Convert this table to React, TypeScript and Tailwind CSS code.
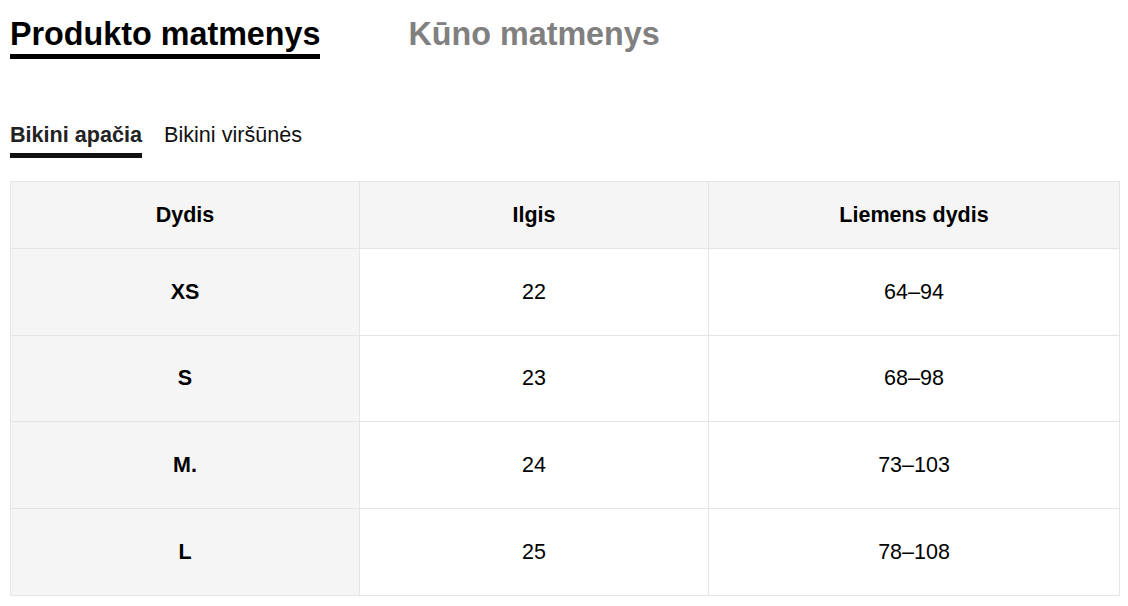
const rows = [
  { size: 'XS', length: '22', waist: '64–94', h: 'h-[87px]' },
  { size: 'S', length: '23', waist: '68–98', h: 'h-[86px]' },
  { size: 'M.', length: '24', waist: '73–103', h: 'h-[87px]' },
  { size: 'L', length: '25', waist: '78–108', h: 'h-[87px]' },
];

export default function App() {
  return (
    <div className="min-h-[606px] bg-white px-[10px] font-['Liberation_Sans',Arial,sans-serif] text-black">
      {/* main tabs */}
      <div className="flex gap-[88px] pt-[18px]">
        <div className="border-b-[5px] border-black pb-[4px] text-[32.3px] font-bold leading-[32px]">Produkto matmenys</div>
        <div className="pb-[4px] text-[32.3px] font-bold leading-[32px] text-[#808080]">Kūno matmenys</div>
      </div>

      {/* sub tabs */}
      <div className="mt-[65px] flex gap-[22px]">
        <div className="border-b-[5px] border-[#111] pb-[8px] text-[21.6px] font-bold leading-[21px] text-[#222]">Bikini apačia</div>
        <div className="pb-[8px] text-[21.6px] leading-[21px] text-[#111]">Bikini viršūnės</div>
      </div>

      <table className="mt-[23px] w-[1110px] table-fixed border-collapse text-[21.5px]">
        <colgroup>
          <col className="w-[349px]" />
          <col className="w-[349px]" />
          <col />
        </colgroup>
        <thead>
          <tr className="h-[67px] bg-[#f5f5f5]">
            <th className="border border-[#e5e5e5] text-center font-bold">Dydis</th>
            <th className="border border-[#e5e5e5] text-center font-bold">Ilgis</th>
            <th className="border border-[#e5e5e5] text-center font-bold">Liemens dydis</th>
          </tr>
        </thead>
        <tbody>
          {rows.map((r) => (
            <tr key={r.size} className={r.h}>
              <td className="border border-[#e5e5e5] bg-[#f5f5f5] text-center font-bold">{r.size}</td>
              <td className="border border-[#e5e5e5] text-center">{r.length}</td>
              <td className="border border-[#e5e5e5] text-center">{r.waist}</td>
            </tr>
          ))}
        </tbody>
      </table>
    </div>
  );
}
